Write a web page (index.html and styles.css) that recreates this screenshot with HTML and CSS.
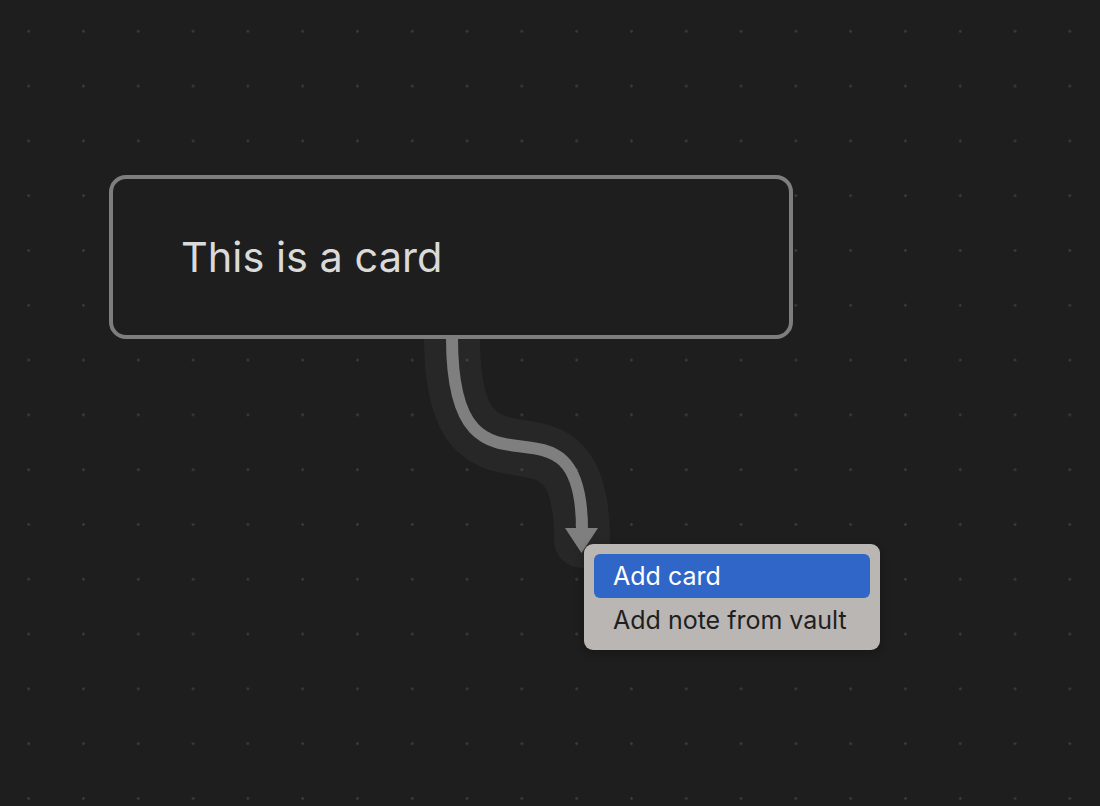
FILE: index.html
```html
<!DOCTYPE html>
<html lang="en">
<head>
<meta charset="utf-8">
<title>Canvas</title>
<link rel="stylesheet" href="styles.css">
</head>
<body>
<div class="canvas">
  <svg class="edge" width="1100" height="806" viewBox="0 0 1100 806" aria-hidden="true">
    <path class="edge-halo" d="M452 338 C452 530 582 370 582 540"/>
    <path class="edge-line" d="M452 338 C452 530 582 370 582 530"/>
    <polygon class="edge-arrow" points="565,528 598,528 581.5,553"/>
  </svg>
  <div class="card">
    <p class="card-text">This is a card</p>
  </div>
  <ul class="menu">
    <li class="menu-item is-selected">Add card</li>
    <li class="menu-item">Add note from vault</li>
  </ul>
</div>
</body>
</html>
```
FILE: styles.css
```css
html, body {
  margin: 0;
  padding: 0;
  height: 100%;
}
body {
  background: #1e1e1e;
  font-family: Inter, "Noto Sans", sans-serif;
  overflow: hidden;
}
.canvas {
  position: relative;
  width: 1100px;
  height: 806px;
  background-color: #1e1e1e;
  background-image: radial-gradient(circle at center, #3b3b3b 0, #3b3b3b 1px, transparent 1.6px);
  background-size: 54.8px 54.8px;
  background-position: 1.3px 3.9px;
}
.edge {
  position: absolute;
  left: 0;
  top: 0;
}
.edge-halo {
  fill: none;
  stroke: rgba(255, 255, 255, 0.045);
  stroke-width: 56;
  stroke-linecap: round;
}
.edge-line {
  fill: none;
  stroke: #7f7f7f;
  stroke-width: 12;
}
.edge-arrow {
  fill: #7f7f7f;
}
.card {
  position: absolute;
  left: 109px;
  top: 175px;
  width: 684px;
  height: 164px;
  box-sizing: border-box;
  border: 4px solid #7e7e7e;
  border-radius: 17px;
  background: #1e1e1e;
  display: flex;
  align-items: center;
  padding-left: 68px;
}
.card-text {
  margin: 0;
  color: #dadada;
  font-size: 41.5px;
  font-weight: 400;
}
.menu {
  position: absolute;
  left: 584px;
  top: 544px;
  width: 296px;
  box-sizing: border-box;
  margin: 0;
  padding: 10px 10px 8px;
  list-style: none;
  background: #bab6b3;
  border-radius: 9px;
  box-shadow: 0 3px 10px rgba(0, 0, 0, 0.25);
}
.menu-item {
  height: 44px;
  line-height: 44px;
  padding: 0 19px;
  border-radius: 6px;
  color: #1f1f1f;
  font-size: 25px;
}
.menu-item.is-selected {
  background: #2f66c8;
  color: #ffffff;
}
```
